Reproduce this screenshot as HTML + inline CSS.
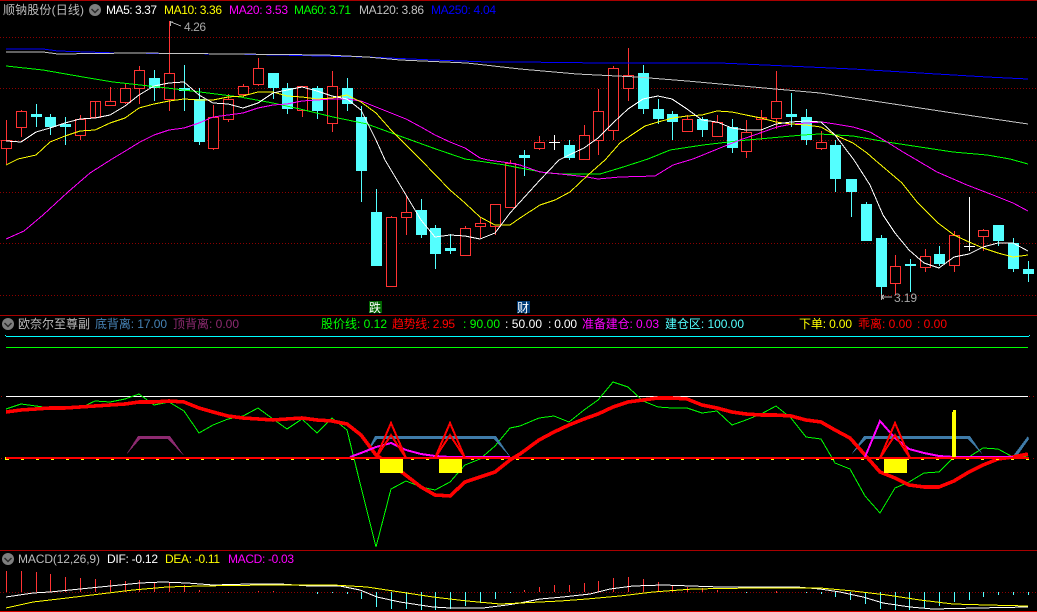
<!DOCTYPE html>
<html><head><meta charset="utf-8"><title>顺钠股份</title>
<style>
html,body{margin:0;padding:0;background:#000;overflow:hidden}
svg{display:block}
text{font-family:"Liberation Sans","Noto Sans CJK SC",sans-serif;font-size:12px}
.l{fill:none;shape-rendering:crispEdges;stroke-width:1}
</style></head><body>
<svg width="1037" height="612" viewBox="0 0 1037 612" xmlns="http://www.w3.org/2000/svg">
<rect width="1037" height="612" fill="#000"/>
<g shape-rendering="crispEdges" fill="#a80000">
<rect x="0" y="0" width="1037" height="1"/>
<rect x="0" y="315" width="1037" height="1"/>
<rect x="0" y="550" width="1037" height="1"/>
<rect x="0" y="611" width="1037" height="1" fill="#d80000"/>
</g>
<g stroke="#8c0000" stroke-dasharray="1 2" shape-rendering="crispEdges">
<path d="M0 37.5H1037M0 88.5H1037M0 140.5H1037M0 192.5H1037M0 243.5H1037M0 295.5H1037M0 592.5H1037"/>
</g>

<!-- red candles -->
<path shape-rendering="crispEdges" stroke="#ff3333" fill="#000" d="
M6.5 120V140M6.5 148V164M1.5 140.5h10v8h-10z
M21.5 110V111M21.5 127V137M16.5 111.5h10v16h-10z
M80.5 115V119M80.5 135V140M75.5 119.5h10v16h-10z
M95.5 101V117M90.5 101.5h10v16h-10z
M110.5 87V101M105.5 101.5h10v4h-10z
M125.5 83V88M125.5 102V104M120.5 88.5h10v14h-10z
M139.5 66V70M139.5 88V104M134.5 70.5h10v18h-10z
M169.5 21V73M169.5 99V111M164.5 73.5h10v26h-10z
M213.5 105V117M213.5 148V150M208.5 117.5h10v31h-10z
M228.5 94V99M228.5 119V122M223.5 99.5h10v20h-10z
M243.5 84V86M243.5 94V98M238.5 86.5h10v8h-10z
M258.5 58V68M258.5 84V86M253.5 68.5h10v16h-10z
M302.5 86V86M302.5 110V117M297.5 86.5h10v24h-10z
M332.5 71V86M332.5 123V132M327.5 86.5h10v37h-10z
M391.5 216V217M391.5 286V287M386.5 217.5h10v69h-10z
M406.5 195V212M406.5 217V235M401.5 212.5h10v5h-10z
M465.5 226V228M465.5 255V256M460.5 228.5h10v27h-10z
M480.5 217V223M480.5 226V238M475.5 223.5h10v3h-10z
M495.5 226V235M490.5 204.5h10v22h-10z
M510.5 160V163M505.5 163.5h10v44h-10z
M539.5 136V142M539.5 148V150M534.5 142.5h10v6h-10z
M584.5 125V135M584.5 159V160M579.5 135.5h10v24h-10z
M598.5 89V111M598.5 140V155M593.5 111.5h10v29h-10z
M613.5 66V68M613.5 130V140M608.5 68.5h10v62h-10z
M628.5 48V75M628.5 88V101M623.5 75.5h10v13h-10z
M687.5 115V119M682.5 119.5h10v12h-10z
M717.5 115V122M712.5 122.5h10v14h-10z
M746.5 120V132M746.5 151V158M741.5 132.5h10v19h-10z
M761.5 110V117M761.5 119V140M756.5 117.5h10v2h-10z
M776.5 71V101M776.5 118V129M771.5 101.5h10v17h-10z
M821.5 131V142M821.5 148V150M816.5 142.5h10v6h-10z
M895.5 255V266M895.5 283V295M890.5 266.5h10v17h-10z
M925.5 249V256M925.5 267V272M920.5 256.5h10v11h-10z
M954.5 231V235M954.5 265V272M949.5 235.5h10v30h-10z
M983.5 229V230M983.5 236V251M978.5 230.5h10v6h-10z"/>

<!-- cyan candles -->
<path shape-rendering="crispEdges" stroke="#54ffff" fill="#54ffff" d="
M36.5 104V127M31.5 114.5h10v2h-10z
M50.5 114V135M45.5 117.5h10v9h-10z
M65.5 117V145M60.5 124.5h10v2h-10z
M154.5 70V101M149.5 78.5h10v9h-10z
M184.5 65V111M179.5 88.5h10v2h-10z
M199.5 88V145M194.5 99.5h10v42h-10z
M273.5 73V99M268.5 73.5h10v14h-10z
M287.5 83V114M282.5 88.5h10v20h-10z
M317.5 86V119M312.5 88.5h10v22h-10z
M347.5 78V111M342.5 88.5h10v15h-10z
M361.5 106V202M356.5 117.5h10v53h-10z
M376.5 189V266M371.5 212.5h10v53h-10z
M421.5 199V238M416.5 210.5h10v24h-10z
M435.5 225V269M430.5 228.5h10v25h-10z
M450.5 234V254M445.5 248.5h10v2h-10z
M524.5 150V176M519.5 155.5h10v2h-10z
M569.5 140V160M564.5 145.5h10v12h-10z
M643.5 65V114M638.5 73.5h10v35h-10z
M658.5 99V124M653.5 109.5h10v9h-10z
M672.5 111V140M667.5 114.5h10v7h-10z
M702.5 117V137M697.5 119.5h10v10h-10z
M732.5 119V153M727.5 127.5h10v20h-10z
M791.5 93V127M786.5 114.5h10v2h-10z
M806.5 109V145M801.5 117.5h10v22h-10z
M835.5 140V192M830.5 145.5h10v33h-10z
M851.5 179V217M846.5 179.5h10v12h-10z
M866.5 202V241M861.5 204.5h10v36h-10z
M881.5 235V298M876.5 238.5h10v48h-10z
M910.5 259V292M905.5 264.5h10v1h-10z
M939.5 246V266M934.5 254.5h10v9h-10z
M998.5 225V246M993.5 225.5h10v15h-10z
M1013.5 238V272M1008.5 243.5h10v25h-10z
M1028.5 261V282M1023.5 269.5h10v4h-10z"/>

<!-- white doji -->
<path shape-rendering="crispEdges" stroke="#fff" fill="none" d="M554.5 135V150M549 142.5H560M969.5 197V251M964 246.5H975"/>

<!-- MA lines -->
<polyline class="l" stroke="#0000ff" points="6,49 43,49 58,51 117,53 233,54 367,57 433,60 488,62 520,62 603,63 720,63 787,66 853,69 920,73 987,77 1028,79"/>
<polyline class="l" stroke="#c4c4c4" points="6,52 43,52 58,54 133,53 233,54 325,55 367,57 400,60 467,63 520,69 577,74 637,77 687,81 753,87 820,93 887,103 953,113 1028,124"/>
<polyline class="l" stroke="#00ff00" points="6,66 43,70 83,77 113,82 140,85 167,88 200,92 240,97 273,103 300,109 333,117 367,124 397,135 433,148 465,159 505,165 520,168 547,173 563,174 600,174 620,168 648,159 670,150 703,145 737,141 770,138 803,135 820,134 853,136 887,142 920,147 953,152 987,155 1010,159 1028,164"/>
<polyline class="l" stroke="#ff00ff" points="6,239 24,231 43,215 68,192 90,173 112,159 127,150 140,142 154,135 169,130 184,128 199,123 213,117 228,115 243,113 258,108 273,105 287,104 302,101 317,100 332,99 347,99 361,101 376,107 391,113 406,119 421,127 435,135 450,142 465,148 480,158 488,160 510,163 520,165 540,172 560,174 587,177 598,179 620,177 655,176 673,165 693,159 720,148 740,140 760,133 777,127 792,124 807,123 822,122 835,124 853,127 870,132 887,142 903,152 915,159 937,172 967,185 993,195 1013,203 1028,211"/>
<polyline class="l" stroke="#ffff00" points="6,165 18,159 36,155 50,142 65,136 80,131 95,130 110,123 125,118 139,108 154,104 169,101 184,99 199,100 213,100 228,97 243,96 258,92 273,92 287,96 302,97 317,99 332,98 347,95 361,102 376,113 391,130 406,145 421,160 450,190 465,203 480,217 495,225 510,225 520,218 540,205 555,200 570,192 588,175 605,160 620,143 630,136 645,126 658,122 673,118 687,116 702,115 717,111 732,112 746,115 761,118 776,122 791,124 806,125 821,127 835,135 853,143 867,153 875,160 902,183 917,202 938,223 954,235 969,242 983,248 998,253 1013,257 1028,255"/>
<polyline class="l" stroke="#ffffff" points="6,141 21,142 36,132 50,128 65,123 80,119 95,118 110,115 125,106 139,95 154,86 169,83 184,82 199,95 213,103 228,104 243,108 258,103 273,93 287,90 302,87 317,91 332,96 347,99 361,110 376,140 385,160 406,195 421,220 435,237 450,235 465,236 480,239 495,233 510,213 520,202 540,180 559,160 569,155 584,148 598,138 613,123 628,109 643,99 658,96 672,99 687,109 702,120 717,122 732,128 746,130 761,130 776,124 791,122 806,121 821,122 835,135 854,160 870,185 883,215 895,233 909,250 924,263 939,268 954,257 969,254 983,247 998,243 1013,243 1028,251"/>

<!-- price labels -->
<path fill="none" stroke="#b4b4b4" shape-rendering="crispEdges" d="M171 22L181 26M170.5 21V26M170 22H173M881.5 294V300M881 297H892M881 297L884 295M881 297L884 299"/>
<text x="184" y="31" fill="#a8a8a8" textLength="22">4.26</text>
<text x="894" y="302" fill="#a8a8a8" textLength="23">3.19</text>

<!-- tags -->
<rect x="369" y="301" width="13" height="12" fill="#006400"/>
<text x="369" y="312" fill="#fff">跌</text>
<rect x="517" y="301" width="13" height="12" fill="#003c78"/>
<text x="517" y="312" fill="#fff">财</text>

<!-- header -->
<text x="3" y="14" fill="#bcbcbc" textLength="81">顺钠股份(日线)</text>
<circle cx="95" cy="10" r="6" fill="#7e7e7e"/><path d="M91.5 9L95 12.5L98.5 9" fill="none" stroke="#2a2a2a" stroke-width="1.5"/>
<text x="106" y="14" fill="#ffffff" textLength="51">MA5: 3.37</text>
<text x="164" y="14" fill="#ffff00" textLength="58">MA10: 3.36</text>
<text x="229" y="14" fill="#ff00ff" textLength="59">MA20: 3.53</text>
<text x="294" y="14" fill="#00ff00" textLength="57">MA60: 3.71</text>
<text x="359" y="14" fill="#c0c0c0" textLength="65">MA120: 3.86</text>
<text x="431" y="14" fill="#0000ff" textLength="65">MA250: 4.04</text>

<!-- sub header -->
<circle cx="8" cy="324" r="6" fill="#7e7e7e"/><path d="M4.5 323L8 326.5L11.5 323" fill="none" stroke="#2a2a2a" stroke-width="1.5"/>
<text x="18" y="328" fill="#bcbcbc" textLength="72">欧奈尔至尊副</text>
<text x="95" y="328" fill="#4682b4" textLength="72">底背离: 17.00</text>
<text x="173" y="328" fill="#8d2a70" textLength="66">顶背离: 0.00</text>
<text x="321" y="328" fill="#00ff00" textLength="66">股价线: 0.12</text>
<text x="392" y="328" fill="#ff0000" textLength="63">趋势线: 2.95</text>
<text x="463" y="328" fill="#00ff00" textLength="37">: 90.00</text>
<text x="505" y="328" fill="#ffffff" textLength="37">: 50.00</text>
<text x="548" y="328" fill="#ffffff" textLength="29">: 0.00</text>
<text x="582" y="328" fill="#ff00ff" textLength="77">准备建仓: 0.03</text>
<text x="665" y="328" fill="#54ffff" textLength="79">建仓区: 100.00</text>
<text x="799" y="328" fill="#ffff00" textLength="53">下单: 0.00</text>
<text x="858" y="328" fill="#ff0000" textLength="54">乖离: 0.00</text>
<text x="917" y="328" fill="#ff0000" textLength="30">: 0.00</text>

<!-- sub panel lines -->
<g shape-rendering="crispEdges">
<rect x="6" y="336" width="1023" height="1" fill="#00ffff"/><rect x="5" y="335" width="1" height="1" fill="#00ffff"/><rect x="1029" y="335" width="1" height="1" fill="#00ffff"/>
<rect x="6" y="347" width="1022" height="1" fill="#00ff00"/>
<rect x="6" y="396" width="1022" height="1" fill="#ffffff"/>
<rect x="1" y="396" width="1" height="1" fill="#a00000"/><rect x="1" y="458" width="1" height="1" fill="#a00000"/>
<rect x="1029" y="396" width="1" height="1" fill="#a00000"/><rect x="1033" y="396" width="1" height="1" fill="#a00000"/>
<rect x="1033" y="458" width="1" height="1" fill="#a00000"/>
</g>
<polyline class="l" stroke="#00ff00" points="6,409 21,404 36,406 50,408 65,408 80,408 95,401 110,402 125,399 139,394 154,405 169,402 184,411 199,433 213,425 228,419 243,416 258,408 273,419 287,429 302,419 317,433 332,418 347,430 361,487 376,547 391,489 406,481 421,487 435,490 450,482 465,465 480,459 495,446 510,428 520,426 539,418 554,416 569,422 584,410 598,400 613,382 628,387 643,401 658,407 672,408 687,408 702,413 717,411 732,425 746,420 761,414 776,406 791,418 806,437 821,439 835,463 850,469 865,496 880,513 895,488 909,482 924,473 939,472 954,457 969,457 983,448 998,449 1013,457 1028,457"/>
<g shape-rendering="crispEdges">
<polygon fill="#8d2a70" points="126,455 138,436 170,436 185,457 168,439 140,439"/>
<polygon fill="#3f7ba8" points="366,454 375,436 496,436 511,458 494,439 377,439"/>
<polygon fill="#3f7ba8" points="851,455 864,436 970,436 983,455 968,439 866,439"/>
<polygon fill="#3f7ba8" points="1013,456 1028,436 1029,439 1017,456"/>
</g>
<polyline fill="none" stroke="#ff0000" stroke-width="3.6" shape-rendering="crispEdges" stroke-linejoin="round" points="6,412 21,410 36,409 50,408 65,408 80,407 95,406 110,405 125,404 139,402 154,402 169,401 184,402 199,408 213,412 228,416 243,418 258,419 273,420 287,419 302,418 317,420 332,421 347,424 361,435 376,455 391,465 403,473 421,487 435,495 450,496 465,482 480,477 495,472 510,460 520,454 539,440 554,432 569,425 584,419 598,414 613,407 628,402 643,400 658,398 672,398 687,399 702,405 717,408 732,412 746,414 761,415 776,415 791,416 806,420 821,422 835,430 850,438 865,455 880,472 895,478 909,485 924,487 939,487 954,481 969,472 983,465 998,459 1013,457 1028,454"/>
<g fill="none" stroke="#ff00ff" stroke-width="2" shape-rendering="crispEdges">
<polyline points="350,457 361,453 376,447 391,443 406,450 421,454 435,456 450,457 510,457"/>
<polyline points="865,457 880,421 895,438 909,449 924,453 939,456 954,457 1013,457"/>
</g>
<g fill="#ffff00" shape-rendering="crispEdges">
<rect x="380" y="458" width="23" height="15"/><rect x="390" y="457" width="3" height="1"/>
<rect x="439" y="458" width="23" height="15"/><rect x="449" y="457" width="3" height="1"/>
<rect x="884" y="458" width="23" height="15"/><rect x="894" y="457" width="3" height="1"/>
<rect x="952" y="412" width="4" height="46"/><rect x="953" y="410" width="3" height="2"/>
</g>
<g fill="none" stroke="#ff0000" stroke-width="2" shape-rendering="crispEdges">
<path d="M376 458L391 423L406 458M376 458L391 435L406 458"/>
<path d="M435 458L450 423L465 458M435 458L450 435L465 458"/>
<path d="M880 458L895 423L910 458M880 458L895 435L910 458"/>
</g>
<rect x="6" y="457" width="1023" height="2" fill="#ff0000" shape-rendering="crispEdges"/>
<path shape-rendering="crispEdges" stroke="#ffff00" stroke-width="1" stroke-dasharray="3 12" d="M6 459.5H1029"/>
<path shape-rendering="crispEdges" stroke="#ffff00" d="M5.5 457V460"/>

<!-- MACD header -->
<circle cx="8" cy="559" r="6" fill="#7e7e7e"/><path d="M4.5 558L8 561.5L11.5 558" fill="none" stroke="#2a2a2a" stroke-width="1.5"/>
<text x="18" y="563" fill="#bcbcbc" textLength="82">MACD(12,26,9)</text>
<text x="107" y="563" fill="#ffffff" textLength="51">DIF: -0.12</text>
<text x="165" y="563" fill="#ffff00" textLength="55">DEA: -0.11</text>
<text x="228" y="563" fill="#ff00ff" textLength="66">MACD: -0.03</text>

<!-- MACD bars -->
<path shape-rendering="crispEdges" stroke="#ff3333" fill="none" d="M6.5 571V592M21.5 571V592M36.5 572V592M50.5 574V592M65.5 577V592M80.5 578V592M95.5 579V592M110.5 580V592M125.5 581V592M139.5 580V592M154.5 582V592M169.5 583V592M184.5 585V592M199.5 590V592M228.5 592V593M258.5 591V592M273.5 591V592M524.5 590V592M539.5 587V592M554.5 585V592M569.5 585V592M584.5 583V592M598.5 581V592M613.5 578V592M628.5 577V592M643.5 579V592M658.5 582V592M672.5 585V592M687.5 587V592M702.5 588V592M717.5 590V592M776.5 591V593"/>
<path shape-rendering="crispEdges" stroke="#54ffff" fill="none" d="M317.5 592V594M332.5 592V593M347.5 592V594M361.5 592V599M376.5 592V607M391.5 592V609M406.5 592V609M421.5 592V610M435.5 592V610M450.5 592V609M465.5 592V606M480.5 592V603M495.5 592V599M510.5 592V593M746.5 592V593M806.5 592V593M821.5 592V594M835.5 592V597M850.5 592V600M865.5 592V604M880.5 592V609M895.5 592V610M909.5 592V610M924.5 592V608M939.5 592V606M954.5 592V602M969.5 592V600M983.5 592V597M998.5 592V595M1013.5 592V595M1028.5 592V595"/>
<polyline class="l" stroke="#ffffff" points="6,597 33,593 50,592 80,589 110,586 140,583 163,582 187,583 213,585 250,584 280,584 310,586 340,586 360,590 377,597 400,602 433,607 450,608 483,608 507,605 520,603 540,599 563,597 590,594 610,589 633,586 663,585 720,587 770,587 797,587 820,589 840,592 863,597 883,603 910,607 933,609 977,608 1028,607"/>
<polyline class="l" stroke="#ffff00" points="6,608 33,602 67,598 100,594 133,590 167,587 200,586 267,585 333,585 367,587 400,592 433,597 467,601 500,604 520,603 560,601 587,599 620,596 653,592 693,589 753,588 820,588 853,591 887,595 920,600 953,604 987,605 1028,606"/>
</svg>
</body></html>
